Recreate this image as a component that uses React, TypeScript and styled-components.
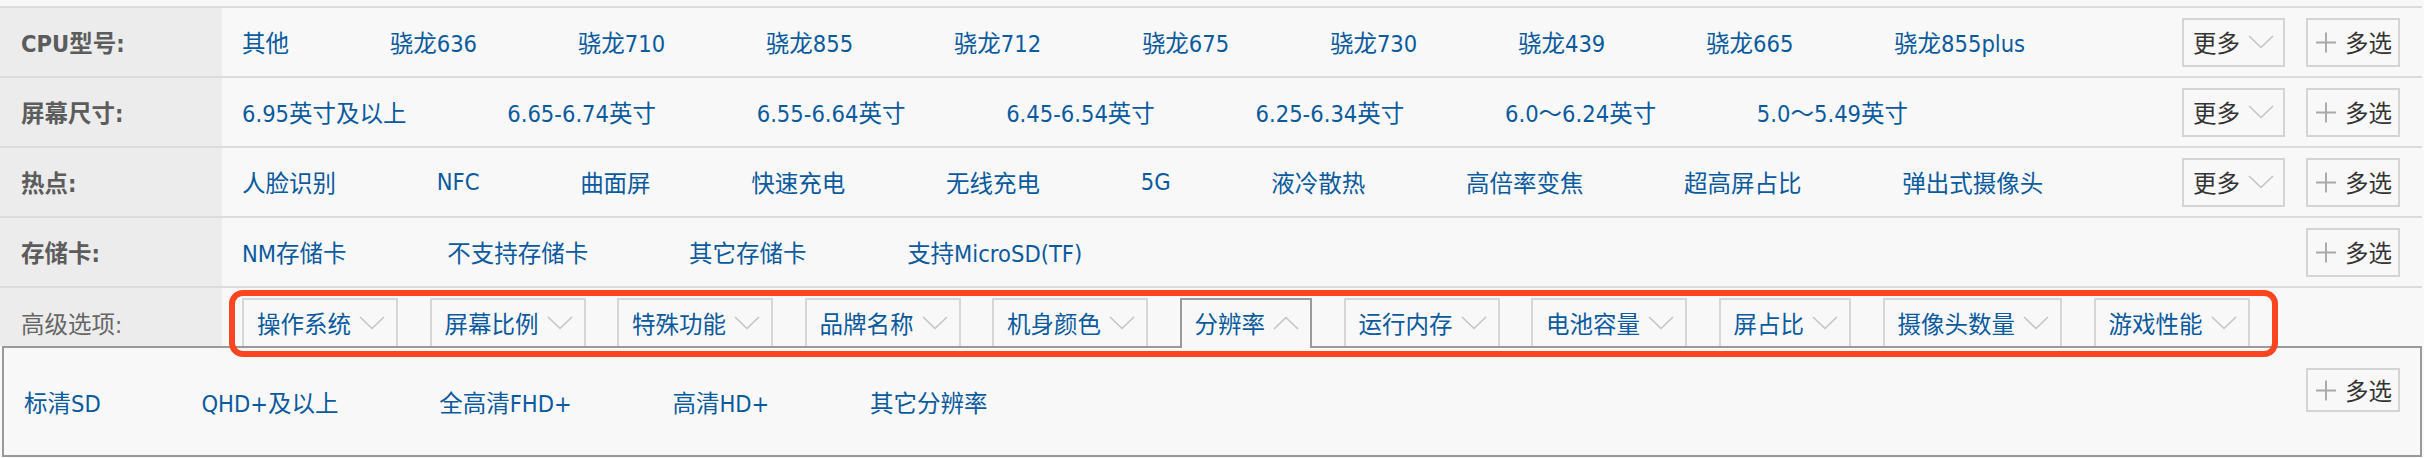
import React from 'react';
import styled, { createGlobalStyle } from 'styled-components';

const FONT = `"DejaVu Sans Condensed", "Liberation Sans", "Noto Sans CJK SC", sans-serif`;

const GlobalStyle = createGlobalStyle`
  html, body { margin: 0; padding: 0; background: #f8f8f8; }
  body { font-family: ${FONT}; font-size: 23.5px; }
  * { box-sizing: border-box; }
`;

const Wrap = styled.div`
  position: relative;
  width: 2422px;
  margin-top: 6px;
  border-top: 2px solid #dcdcdc;
`;

const Row = styled.div`
  display: flex;
  height: 70px;
  border-bottom: 2px solid #dcdcdc;
`;

const Label = styled.div<{ $bold?: boolean; $top?: number }>`
  flex: 0 0 222px;
  display: flex;
  align-items: center;
  padding-left: 21px;
  padding-top: ${(p) => p.$top ?? 0}px;
  background: #ececec;
  color: ${(p) => (p.$bold ? '#5c5c5c' : '#666')};
  font-weight: ${(p) => (p.$bold ? 700 : 400)};
  font-size: 23.5px;
  white-space: nowrap;
`;

const Values = styled.div<{ $pad?: number }>`
  flex: 1;
  display: flex;
  align-items: center;
  padding-left: ${(p) => p.$pad ?? 20}px;
  white-space: nowrap;
`;

const Value = styled.span`
  margin-right: 100.7px;
  color: #0b5a9e;
  font-size: 23.5px;
  cursor: pointer;
`;

const Actions = styled.div`
  display: flex;
  align-items: center;
  gap: 21px;
  padding-right: 22px;
`;

const MoreBtn = styled.div`
  display: flex;
  align-items: center;
  gap: 8px;
  width: 103px;
  height: 49px;
  padding: 0 8px 0 9px;
  border: 2px solid #d4d4d4;
  color: #333;
  font-size: 23.5px;
`;

const MultiBtn = styled.div<{ $compact?: boolean }>`
  display: flex;
  align-items: center;
  gap: 9px;
  width: 94px;
  height: ${(p) => (p.$compact ? 44 : 49)}px;
  padding: 0 6px 0 8px;
  border: 2px solid #d4d4d4;
  color: #333;
  font-size: 23.5px;
  white-space: nowrap;
  align-self: ${(p) => (p.$compact ? 'flex-start' : 'auto')};
  margin-top: ${(p) => (p.$compact ? 20 : 0)}px;
`;

const AdvRow = styled.div`
  display: flex;
  height: 58px;
`;

const Tabs = styled.div`
  flex: 1;
  display: flex;
  align-items: flex-end;
  gap: 31.5px;
  padding-left: 20px;
`;

const Tab = styled.div<{ $active?: boolean }>`
  position: relative;
  z-index: ${(p) => (p.$active ? 2 : 0)};
  display: flex;
  align-items: center;
  gap: 8px;
  height: ${(p) => (p.$active ? 50 : 48)}px;
  margin-bottom: ${(p) => (p.$active ? -2 : 0)}px;
  padding: 0 11px ${(p) => (p.$active ? 2 : 0)}px 13px;
  border: 2px solid ${(p) => (p.$active ? '#9a9a9a' : '#d6d6d6')};
  border-bottom: none;
  background: #f8f8f8;
  color: #0b5a9e;
  font-size: 23.5px;
  white-space: nowrap;
`;

const Panel = styled.div`
  display: flex;
  height: 111px;
  margin-left: 2px;
  border: 2px solid #9a9a9a;
  padding-right: 20px;
`;

const Annotation = styled.div`
  position: absolute;
  left: 229px;
  top: 282px;
  width: 2049px;
  height: 67px;
  border: 6px solid #fb4420;
  border-radius: 14px;
  pointer-events: none;
`;

const Chevron = ({ up }: { up?: boolean }) => (
  <svg width="26" height="14" viewBox="0 0 26 14" fill="none">
    <path
      d={up ? 'M1 13 L13 1.5 L25 13' : 'M1 1 L13 12.5 L25 1'}
      stroke="#c4c4c4"
      strokeWidth="1.6"
    />
  </svg>
);

const Plus = () => (
  <svg width="21" height="21" viewBox="0 0 21 21" fill="none">
    <path d="M10.5 0 V21 M0 10.5 H21" stroke="#a8a8a8" strokeWidth="2" />
  </svg>
);

type RowData = { label: string; values: string[]; more: boolean };

const rows: RowData[] = [
  {
    label: 'CPU型号:',
    values: ['其他', '骁龙636', '骁龙710', '骁龙855', '骁龙712', '骁龙675', '骁龙730', '骁龙439', '骁龙665', '骁龙855plus'],
    more: true,
  },
  {
    label: '屏幕尺寸:',
    values: ['6.95英寸及以上', '6.65-6.74英寸', '6.55-6.64英寸', '6.45-6.54英寸', '6.25-6.34英寸', '6.0～6.24英寸', '5.0～5.49英寸'],
    more: true,
  },
  {
    label: '热点:',
    values: ['人脸识别', 'NFC', '曲面屏', '快速充电', '无线充电', '5G', '液冷散热', '高倍率变焦', '超高屏占比', '弹出式摄像头'],
    more: true,
  },
  {
    label: '存储卡:',
    values: ['NM存储卡', '不支持存储卡', '其它存储卡', '支持MicroSD(TF)'],
    more: false,
  },
];

const tabs = ['操作系统', '屏幕比例', '特殊功能', '品牌名称', '机身颜色', '分辨率', '运行内存', '电池容量', '屏占比', '摄像头数量', '游戏性能'];
const activeTab = '分辨率';
const resolutions = ['标清SD', 'QHD+及以上', '全高清FHD+', '高清HD+', '其它分辨率'];

export default function App() {
  return (
    <>
      <GlobalStyle />
      <Wrap>
        {rows.map((r) => (
          <Row key={r.label}>
            <Label $bold>{r.label}</Label>
            <Values>
              {r.values.map((v) => (
                <Value key={v}>{v}</Value>
              ))}
            </Values>
            <Actions>
              {r.more && (
                <MoreBtn>
                  更多
                  <Chevron />
                </MoreBtn>
              )}
              <MultiBtn>
                <Plus />
                多选
              </MultiBtn>
            </Actions>
          </Row>
        ))}
        <AdvRow>
          <Label $top={12}>高级选项:</Label>
          <Tabs>
            {tabs.map((t) => (
              <Tab key={t} $active={t === activeTab}>
                {t}
                <Chevron up={t === activeTab} />
              </Tab>
            ))}
          </Tabs>
        </AdvRow>
        <Panel>
          <Values $pad={20}>
            {resolutions.map((v) => (
              <Value key={v}>{v}</Value>
            ))}
          </Values>
          <MultiBtn $compact>
            <Plus />
            多选
          </MultiBtn>
        </Panel>
        <Annotation />
      </Wrap>
    </>
  );
}
